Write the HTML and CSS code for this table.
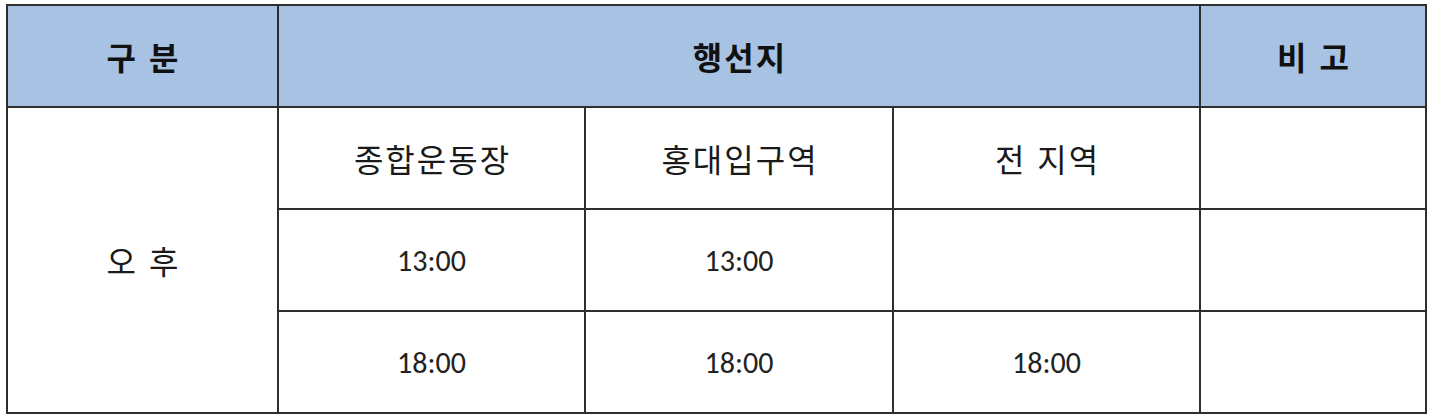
FILE: index.html
```html
<!DOCTYPE html>
<html lang="ko">
<head>
<meta charset="utf-8">
<link rel="stylesheet" href="styles.css">
</head>
<body>
<table class="schedule">
  <colgroup>
    <col class="c1">
    <col class="c2">
    <col class="c3">
    <col class="c4">
    <col class="c5">
  </colgroup>
  <thead>
    <tr class="head">
      <th>구 분</th>
      <th colspan="3">행선지</th>
      <th>비 고</th>
    </tr>
  </thead>
  <tbody>
    <tr>
      <td rowspan="3" class="ko">오 후</td>
      <td class="ko">종합운동장</td>
      <td class="ko">홍대입구역</td>
      <td class="ko">전 지역</td>
      <td></td>
    </tr>
    <tr>
      <td class="num">13:00</td>
      <td class="num">13:00</td>
      <td></td>
      <td></td>
    </tr>
    <tr>
      <td class="num">18:00</td>
      <td class="num">18:00</td>
      <td class="num">18:00</td>
      <td></td>
    </tr>
  </tbody>
</table>
</body>
</html>
```
FILE: styles.css
```css
html, body {
  margin: 0;
  padding: 0;
  background: #ffffff;
}

body {
  padding: 4px 0 0 6px;
}

.schedule {
  border-collapse: collapse;
  table-layout: fixed;
  width: 1419px;
  font-family: "Noto Sans CJK KR", sans-serif;
  color: #1a1a1a;
}

.c1 { width: 271px; }
.c2 { width: 307px; }
.c3 { width: 308px; }
.c4 { width: 307px; }
.c5 { width: 226px; }

.schedule th,
.schedule td {
  border: 2px solid #2e2e2e;
  text-align: center;
  vertical-align: middle;
  padding: 0;
  height: 100px;
}

.head th {
  background: #a7c2e3;
  font-weight: 700;
  font-size: 32px;
  letter-spacing: 2px;
  text-indent: 2px;
  color: #111111;
}

.ko {
  font-size: 32px;
  font-weight: 400;
  letter-spacing: 2px;
  text-indent: 2px;
}

.num {
  font-family: Carlito, Lato, "Noto Sans CJK KR", sans-serif;
  font-size: 30px;
  color: #222222;
}
```
